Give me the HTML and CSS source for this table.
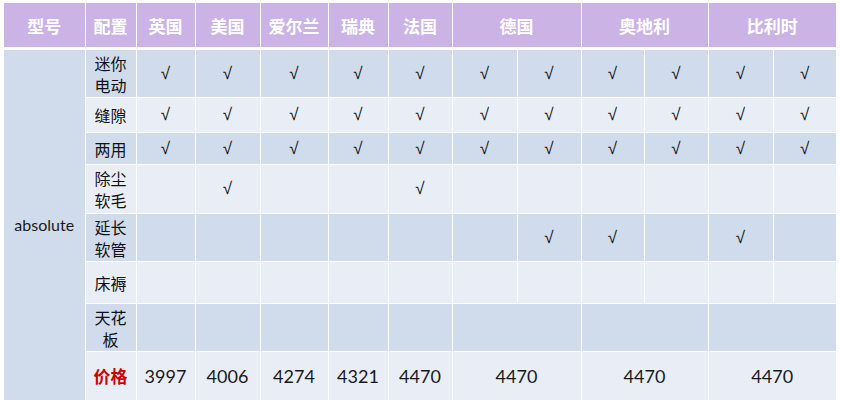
FILE: index.html
```html
<!DOCTYPE html>
<html lang="zh">
<head>
<meta charset="utf-8">
<link rel="stylesheet" href="styles.css">
</head>
<body>
<table class="spec">
  <colgroup>
    <col class="c-model"><col class="c-conf"><col class="c-59"><col class="c-65"><col class="c-68"><col class="c-60"><col class="c-64"><col class="c-65"><col class="c-64"><col class="c-63"><col class="c-64"><col class="c-65"><col class="c-63">
  </colgroup>
  <thead>
    <tr class="head">
      <th>型号</th><th>配置</th><th>英国</th><th>美国</th><th>爱尔兰</th><th>瑞典</th><th>法国</th>
      <th colspan="2">德国</th><th colspan="2">奥地利</th><th colspan="2">比利时</th>
    </tr>
  </thead>
  <tbody>
    <tr class="dark r1">
      <td class="model" rowspan="8">absolute</td>
      <td class="conf"><span class="ln">迷你</span><span class="ln">电动</span></td>
      <td class="ck">√</td><td class="ck">√</td><td class="ck">√</td><td class="ck">√</td><td class="ck">√</td><td class="ck">√</td><td class="ck">√</td><td class="ck">√</td><td class="ck">√</td><td class="ck">√</td><td class="ck">√</td>
    </tr>
    <tr class="light r2">
      <td class="conf">缝隙</td>
      <td class="ck">√</td><td class="ck">√</td><td class="ck">√</td><td class="ck">√</td><td class="ck">√</td><td class="ck">√</td><td class="ck">√</td><td class="ck">√</td><td class="ck">√</td><td class="ck">√</td><td class="ck">√</td>
    </tr>
    <tr class="dark r3">
      <td class="conf">两用</td>
      <td class="ck">√</td><td class="ck">√</td><td class="ck">√</td><td class="ck">√</td><td class="ck">√</td><td class="ck">√</td><td class="ck">√</td><td class="ck">√</td><td class="ck">√</td><td class="ck">√</td><td class="ck">√</td>
    </tr>
    <tr class="light r4">
      <td class="conf"><span class="ln">除尘</span><span class="ln">软毛</span></td>
      <td class="ck"></td><td class="ck">√</td><td class="ck"></td><td class="ck"></td><td class="ck">√</td><td class="ck"></td><td class="ck"></td><td class="ck"></td><td class="ck"></td><td class="ck"></td><td class="ck"></td>
    </tr>
    <tr class="dark r5">
      <td class="conf"><span class="ln">延长</span><span class="ln">软管</span></td>
      <td class="ck"></td><td class="ck"></td><td class="ck"></td><td class="ck"></td><td class="ck"></td><td class="ck"></td><td class="ck">√</td><td class="ck">√</td><td class="ck"></td><td class="ck">√</td><td class="ck"></td>
    </tr>
    <tr class="light r6">
      <td class="conf">床褥</td>
      <td class="ck"></td><td class="ck"></td><td class="ck"></td><td class="ck"></td><td class="ck"></td><td class="ck"></td><td class="ck"></td><td class="ck"></td><td class="ck"></td><td class="ck"></td><td class="ck"></td>
    </tr>
    <tr class="dark r7">
      <td class="conf"><span class="ln">天花</span><span class="ln">板</span></td>
      <td class="ck"></td><td class="ck"></td><td class="ck"></td><td class="ck"></td><td class="ck"></td><td class="ck" colspan="2"></td><td class="ck" colspan="2"></td><td class="ck" colspan="2"></td>
    </tr>
    <tr class="light r8">
      <td class="conf price">价格</td>
      <td class="num">3997</td><td class="num">4006</td><td class="num">4274</td><td class="num">4321</td><td class="num">4470</td>
      <td class="num" colspan="2">4470</td><td class="num" colspan="2">4470</td><td class="num" colspan="2">4470</td>
    </tr>
  </tbody>
</table>
</body>
</html>
```

FILE: styles.css
```css
html, body {
  margin: 0;
  padding: 0;
  background: #ffffff;
}

body {
  padding: 3px 0 0 4px;
}

.spec {
  border-collapse: collapse;
  table-layout: fixed;
  width: 832px;
  font-family: "Noto Sans CJK SC", "Liberation Sans", sans-serif;
  color: #111111;
}

.c-model { width: 81px; }
.c-conf { width: 51px; }
.c-59 { width: 59px; }
.c-60 { width: 60px; }
.c-63 { width: 63px; }
.c-64 { width: 64px; }
.c-65 { width: 65px; }
.c-68 { width: 68px; }

.spec th,
.spec td {
  border: 1px solid #ffffff;
  padding: 0;
  text-align: center;
  vertical-align: middle;
}

.spec tr > :first-child { border-left: none; }
.spec tr > :last-child { border-right: none; }
.head th { border-top: none; }

.head th {
  background: #ccb3e5;
  color: #ffffff;
  font-weight: 700;
  font-size: 17px;
  height: 44px;
  border-bottom: 3px solid #ffffff;
}

.dark td { background: #d0dbec; }
.light td { background: #e9edf5; }
.spec td.model { background: #d0dbec; }

.r1 td { height: 47px; }
.r2 td { height: 34px; }
.r3 td { height: 31px; }
.r4 td { height: 48px; }
.r5 td { height: 47px; }
.r6 td { height: 41px; }
.r7 td { height: 47px; }
.r8 td { height: 48px; border-bottom: none; }

.model {
  font-family: Lato, "Liberation Sans", sans-serif;
  font-size: 16px;
  color: #1a1a1a;
}

.conf {
  font-size: 16px;
  line-height: 22px;
  color: #111111;
}

.ln {
  display: block;
  height: 22px;
  line-height: 22px;
}

.ck {
  font-family: "Liberation Sans", sans-serif;
  font-size: 17px;
  color: #111111;
}

.num {
  font-family: Lato, "Liberation Sans", sans-serif;
  font-size: 18px;
  color: #1a1a1a;
}

.spec td.price {
  color: #cc0000;
  font-weight: 700;
  font-size: 17px;
}
```
